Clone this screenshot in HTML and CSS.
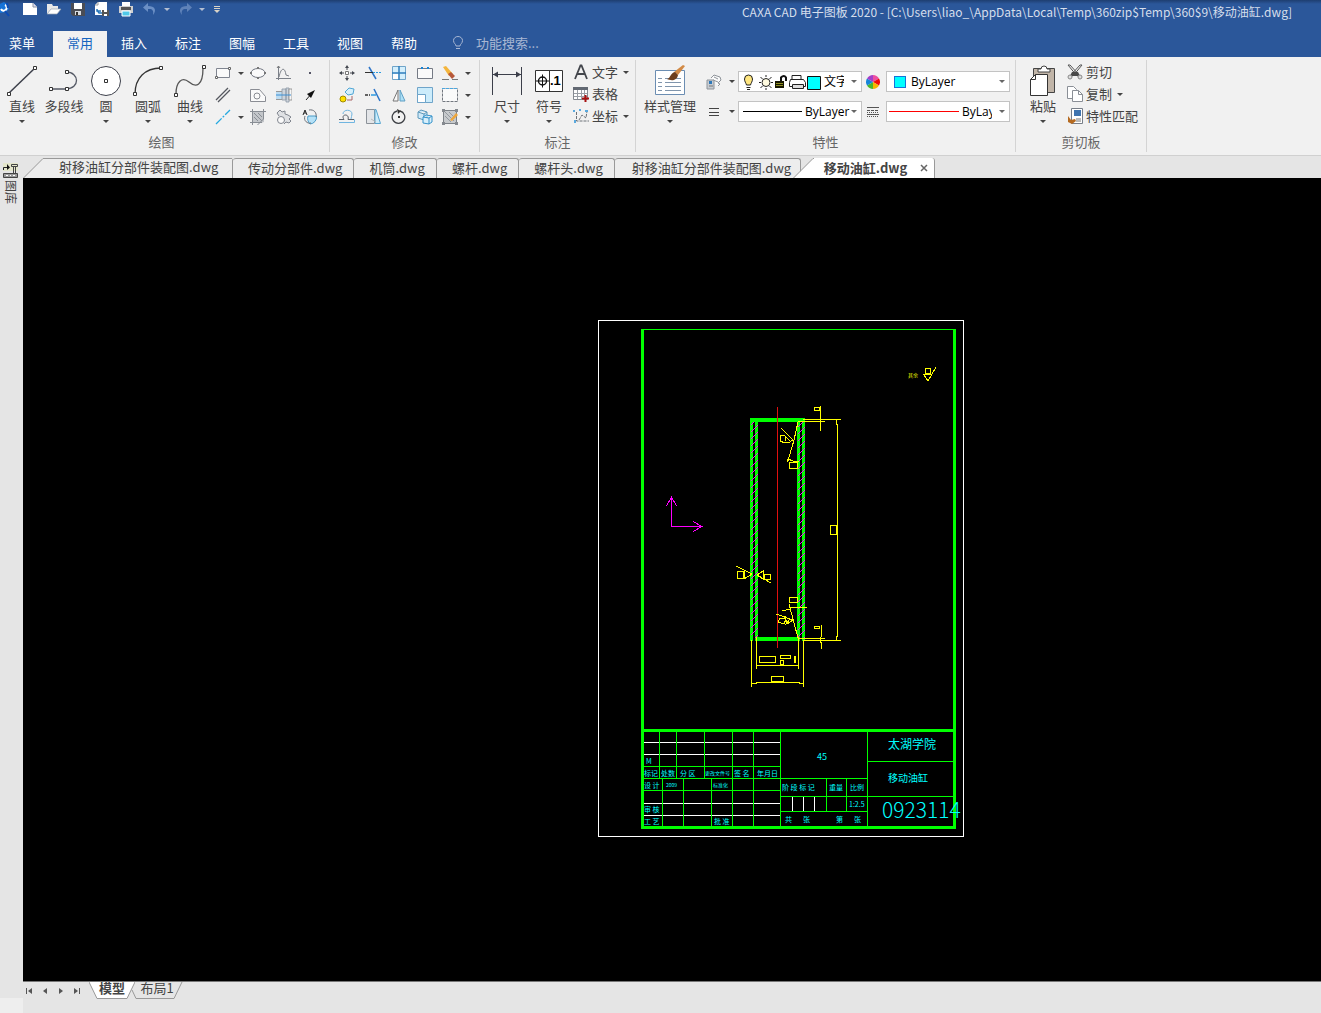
FILE: index.html
```html
<!DOCTYPE html>
<html lang="zh-CN">
<head>
    <meta charset="UTF-8">
    <meta name="viewport" content="width=device-width, initial-scale=1.0">
    <title>CAXA CAD 电子图板 2020</title>
    <link rel="stylesheet" href="styles.css">
</head>
<body>
    <!-- Title bar -->
    <header class="title-bar">
        <div class="quick-access">
            <button class="quick app" aria-label="CAXA"><svg width="12" height="18" viewBox="0 0 12 18"><path d="M0 4l4-2 4 3 1 4-3 3-6 1" fill="#1673d8"/><path d="M1 9a3 3 0 1 0 4-4" fill="none" stroke="#fff" stroke-width="2"/><path d="M5 11l4 5M7 3l1 5" stroke="#0a4bb5" stroke-width="2"/></svg></button>
            <button class="quick" aria-label="新建"><svg width="16" height="16" viewBox="0 0 16 16"><path d="M1 2h10l4 4v8H1z" fill="#fff"/><path d="M11 2v4h4" fill="#dde" stroke="#8a95a8"/></svg></button>
            <button class="quick" aria-label="打开"><svg width="16" height="16" viewBox="0 0 16 16"><path d="M1 13V3h5l1 2h5v3H6z" fill="#e8e8e8"/><path d="M1 13l4-5h10l-4 5z" fill="#fff" stroke="#9aa3b0" stroke-width=".7"/></svg></button>
            <button class="quick" aria-label="保存"><svg width="16" height="16" viewBox="0 0 16 16"><path d="M1 2h14v13H3l-2-2z" fill="#4a4d55"/><path d="M4 2h8v6H4z" fill="#fff"/><path d="M5 10h6v4H5z" fill="#d8dbe0"/><path d="M6 11h2v3H6z" fill="#333"/></svg></button>
            <button class="quick" aria-label="另存为"><svg width="16" height="16" viewBox="0 0 16 16"><path d="M4 1h9v13H1V4z" fill="#fff"/><path d="M4 1v3H1" fill="none" stroke="#999"/><path d="M3 8v2h4M3 9l2 3h3" stroke="#2674b8" stroke-width="1.5" fill="none"/><path d="M8 9h7v6H8z" fill="#555"/><path d="M10 9h3v2h-3zM10 13h3v2h-3z" fill="#fff"/></svg></button>
            <button class="quick" aria-label="打印"><svg width="16" height="16" viewBox="0 0 16 16"><path d="M4 1h8v5H4z" fill="#fff"/><path d="M1 5h14v7H1z" fill="#d0d0d0"/><path d="M3 6h10v3H3z" fill="#555"/><path d="M4 10h8v5H4z" fill="#50c8e8" stroke="#fff"/></svg></button>
            <button class="quick dim" aria-label="撤销"><svg width="16" height="16" viewBox="0 0 16 16"><path d="M6 2L1 6.500l5 4.500V8c4-.5 6 1 5 6 4-5 2-9-5-9z" fill="#6b8fc5"/></svg></button>
            <i class="caret light"></i>
            <button class="quick dim" aria-label="重做"><svg width="16" height="16" viewBox="0 0 16 16"><path d="M10 2l5 4.500-5 4.500V8c-4-.5-6 1-5 6-4-5-2-9 5-9z" fill="#5f82b8"/></svg></button>
            <i class="caret light"></i>
            <button class="quick more" aria-label="自定义"><svg width="8" height="9" viewBox="0 0 8 9"><path d="M1 1.500h6M1 3.500h6" stroke="#d9d3c6"/><path d="M1 5h6L4 8z" fill="#d9d3c6"/></svg></button>
        </div>
        <h1 class="title">CAXA CAD 电子图板 2020 - [C:\Users\liao_\AppData\Local\Temp\360zip$Temp\360$9\移动油缸.dwg]</h1>
    </header>

    <!-- Menu tabs -->
    <nav class="menu">
        <button class="menu-item first">菜单</button>
        <button class="menu-item active">常用</button>
        <button class="menu-item">插入</button>
        <button class="menu-item">标注</button>
        <button class="menu-item">图幅</button>
        <button class="menu-item">工具</button>
        <button class="menu-item">视图</button>
        <button class="menu-item">帮助</button>
        <label class="search">
            <svg width="12" height="14" viewBox="0 0 12 14"><path d="M4 10c0-2-2.500-2.500-2.500-5.500a4.500 4 0 0 1 9 0C10.500 7.500 8 8 8 10zM4 12.500h4" fill="none" stroke="#a9b7d3"/></svg>
            <input type="text" placeholder="功能搜索..." aria-label="功能搜索">
        </label>
    </nav>

    <!-- Ribbon -->
    <div class="ribbon">
        <section class="group draw">
            <div class="group-body">
                <button class="big"><svg width="32" height="32" viewBox="0 0 32 32"><path d="M3 28L29 3" stroke="#3c3f4a" stroke-width="1.500"/><path d="M1.500 27.500h3v3h-3zM27.500 1.500h3v3h-3z" class="node"/></svg><span>直线</span><i class="caret"></i></button>
                <button class="big"><svg width="32" height="32" viewBox="0 0 32 32"><path d="M2 24h16c14 0 14-17 0-17" fill="none" stroke="#555a66" stroke-width="1.300"/><path d="M1.500 22.500h3v3h-3zM17.500 22.500h3v3h-3zM17.500 5.500h3v3h-3z" class="node"/></svg><span>多段线</span></button>
                <button class="big"><svg width="32" height="32" viewBox="0 0 32 32"><circle cx="16" cy="16" r="14.500" fill="#fff" stroke="#3c3f4a"/><path d="M14.500 14.500h3v3h-3z" class="node"/></svg><span>圆</span><i class="caret"></i></button>
                <button class="big"><svg width="32" height="32" viewBox="0 0 32 32"><path d="M3 29C3 13 13 3 29 3" fill="none" stroke="#333" stroke-width="1.300"/><path d="M1.500 27.500h3v3h-3zM27.500 1.500h3v3h-3z" class="node"/></svg><span>圆弧</span><i class="caret"></i></button>
                <button class="big"><svg width="32" height="32" viewBox="0 0 32 32"><path d="M2 29c0-12 6-18 13-12s14 4 14-14" fill="none" stroke="#555" stroke-width="1.300"/><path d="M.5 28.500h3v3h-3zM28.500.5h3v3h-3z" class="node"/></svg><span>曲线</span><i class="caret"></i></button>
                <div class="tools">
                    <button class="tool split" aria-label="矩形"><svg width="16" height="16" viewBox="0 0 16 16"><path d="M1.500 3.500h13v9h-13z" fill="#fafafa" stroke="#808590"/><path d="M.5 11.500h2v2h-2zM13.500 2.500h2v2h-2z" fill="#fff" stroke="#666"/></svg><i class="caret"></i></button>
                    <button class="tool" aria-label="椭圆"><svg width="16" height="16" viewBox="0 0 16 16"><ellipse cx="8" cy="8" rx="7" ry="4.500" fill="#fafafa" stroke="#707580"/><path d="M7 2h2v2H7zM0 7h2v2H0zM14 7h2v2h-2zM7 12h2v2H7z" fill="#777"/></svg></button>
                    <button class="tool" aria-label="公式曲线"><svg width="16" height="16" viewBox="0 0 16 16"><path d="M2.500 1v14M0 13.500h15M3 12c2-10 6-10 7-2l3 1" fill="none" stroke="#7b8088"/><path d="M1 3l1.500-2L4 3" fill="none" stroke="#777"/></svg></button>
                    <button class="tool" aria-label="点"><svg width="16" height="16" viewBox="0 0 16 16"><path d="M7 7h2v2H7z" fill="#556"/></svg></button>

                    <button class="tool split" aria-label="平行线"><svg width="16" height="16" viewBox="0 0 16 16"><path d="M1 13L13 1M3 15L15 3" stroke="#55585f" stroke-width="1.300"/></svg></button>
                    <button class="tool" aria-label="轮廓"><svg width="16" height="16" viewBox="0 0 16 16"><path d="M.5 2.500h9l6 7v5H.5z" fill="#fafafa" stroke="#8a8d94"/><circle cx="7" cy="9" r="3" fill="none" stroke="#8a8d94"/></svg></button>
                    <button class="tool" aria-label="孔/轴"><svg width="16" height="16" viewBox="0 0 16 16"><path d="M0 4h6v8H0z" fill="#bcdcf2"/><path d="M6 2h4v11H6zM10 1h3v14h-3z" fill="#cfd5dc" stroke="#8b98a5" stroke-width=".8"/><path d="M13 2h3v11h-3z" fill="#f6f6f6" stroke="#888" stroke-width=".8"/><path d="M0 8h15" stroke="#3c8ed2"/><path d="M0 4.500h6M0 12.500h6" stroke="#999"/></svg></button>
                    <button class="tool" aria-label="箭头"><svg width="16" height="16" viewBox="0 0 16 16"><path d="M4 13l6-7" stroke="#222"/><path d="M13 3L5 7l4 4z" fill="#111"/></svg></button>

                    <button class="tool split" aria-label="中心线"><svg width="16" height="16" viewBox="0 0 16 16"><path d="M1 15L15 1" stroke="#25a9e0" stroke-width="1.300" stroke-dasharray="8 1.500 2 1.500"/></svg><i class="caret"></i></button>
                    <button class="tool" aria-label="剖面线"><svg width="16" height="16" viewBox="0 0 16 16"><path d="M2 3h12v10l-3 1H2z" fill="#c3c6ca"/><path d="M2.500 0v16M13.500 0v10l-6 6M0 2.500h16M0 13.500h12M4 4l8 8M8 4l4 4M4 8l4 4" fill="none" stroke="#888d94"/></svg></button>
                    <button class="tool" aria-label="齿轮"><svg width="16" height="16" viewBox="0 0 16 16"><path d="M1 4l3-3 2 2 3-1v3l3 1 3 2-2 2 2 2-2 2-3-1-2 2" fill="#dfe1e4" stroke="#81868f"/><circle cx="5" cy="11" r="3.500" fill="#fafafa" stroke="#81868f"/><path d="M1 4l2 3" stroke="#81868f"/></svg></button>
                    <button class="tool" aria-label="局部放大"><svg width="16" height="16" viewBox="0 0 16 16"><path d="M6 7h8.500A7 7 0 0 1 8 15c-2-2-3-5-2-8z" fill="#b5e1f7" stroke="#4a9cc8"/><path d="M7 1c5-1 8 3 7 7M3 7c-2 5 3 8 6 7" fill="none" stroke="#6c7078"/><path d="M1 6l2-5 2 5M2 4h2" fill="none" stroke="#222"/></svg></button>
                </div>
            </div>
            <h2>绘图</h2>
        </section>

        <section class="group modify">
            <div class="group-body">
                <div class="tools">
                    <button class="tool" aria-label="平移"><svg width="16" height="16" viewBox="0 0 16 16"><path d="M6 3l2-3 2 3zM6 13l2 3 2-3zM3 6L0 8l3 2zM13 6l3 2-3 2z" fill="#43474f"/><path d="M6.500 6.500h3v3h-3z" fill="#fff" stroke="#777"/><path d="M8 3v2M8 11v2M3 8h2M11 8h2" stroke="#43474f"/></svg></button>
                    <button class="tool" aria-label="裁剪"><svg width="16" height="16" viewBox="0 0 16 16"><path d="M4 2l7 12" stroke="#2e75c8" stroke-width="1.500"/><path d="M0 7.500h8" stroke="#333"/><path d="M8 7.500h8" stroke="#2e9be0" stroke-dasharray="2 1"/></svg></button>
                    <button class="tool" aria-label="阵列"><svg width="16" height="16" viewBox="0 0 16 16"><path d="M1.500 1.500h13v13h-13z" fill="#d4effc" stroke="#6fa4c9"/><path d="M8 1v14M1 8h14" stroke="#2f7fbd" stroke-width="1.500"/><path d="M2 9h5v5H2z" fill="#fff"/></svg></button>
                    <button class="tool" aria-label="打断"><svg width="16" height="16" viewBox="0 0 16 16"><path d="M4 3.500H.5v10h15v-10H12M6 3.500h4" fill="#fafafa" stroke="#757a84"/><path d="M4 2h2v2H4zM10 2h2v2h-2z" fill="#1584d8"/></svg></button>
                    <button class="tool split" aria-label="删除"><svg width="16" height="16" viewBox="0 0 16 16"><path d="M1 2l3-1 7 8-4 2z" fill="#f4b53c"/><path d="M6 9l3-2 4 4-3 3z" fill="#b7593b"/><path d="M0 14.500h7M10 14.500h6" stroke="#777"/></svg><i class="caret"></i></button>

                    <button class="tool" aria-label="平移复制"><svg width="16" height="16" viewBox="0 0 16 16"><circle cx="4" cy="12" r="3" fill="#ffe000" stroke="#a08b00"/><path d="M6 5l4-4 5 1-1 5-5 1z" fill="#d4effc" stroke="#52a7d5"/><path d="M8 13h5V9" fill="none" stroke="#a66" /></svg></button>
                    <button class="tool" aria-label="延伸"><svg width="16" height="16" viewBox="0 0 16 16"><path d="M9 2l6 12" stroke="#2e75c8" stroke-width="1.500"/><path d="M0 8h5" stroke="#333" stroke-width="1.500" stroke-dasharray="3 1"/><path d="M6 8h5" stroke="#2e9be0" stroke-width="1.500"/></svg></button>
                    <button class="tool" aria-label="镜像"><svg width="16" height="16" viewBox="0 0 16 16"><path d="M7 3v11H2z" fill="#fafafa" stroke="#777"/><path d="M9 3v11h5z" fill="#ade0f7" stroke="#5f9fc4"/></svg></button>
                    <button class="tool" aria-label="缩放"><svg width="16" height="16" viewBox="0 0 16 16"><path d="M.5.5h15v15H.5z" fill="#ccecfb" stroke="#6fa4c9"/><path d="M.5 7.500h8v8h-8z" fill="#fff" stroke="#6fa4c9"/></svg></button>
                    <button class="tool split" aria-label="拉伸"><svg width="16" height="16" viewBox="0 0 16 16"><path d="M.5 1.500h15v13H.5z" fill="#fafafa" stroke="#72777f" stroke-dasharray="3 1"/><path d="M0 1.500h16" stroke="#4ba7df" stroke-dasharray="3 1"/></svg><i class="caret"></i></button>

                    <button class="tool" aria-label="等距线"><svg width="16" height="16" viewBox="0 0 16 16"><path d="M0 10.500h5C1 5 11 4 9 10.500h6" fill="none" stroke="#5a6069"/><path d="M0 13.500h15.500v-3M4 5c0-5 9-5 9 0 0 2-1 3-1 5" fill="none" stroke="#70b5e0"/></svg></button>
                    <button class="tool" aria-label="倒角"><svg width="16" height="16" viewBox="0 0 16 16"><path d="M1.500.5h8v14h-8z" fill="#e3e5e8" stroke="#8c9299"/><path d="M10 .500h1l4.500 14H10z" fill="#ccecfb" stroke="#58a6d0"/><path d="M6 10l5 3" fill="none" stroke="#bbb"/></svg></button>
                    <button class="tool" aria-label="旋转"><svg width="16" height="16" viewBox="0 0 16 16"><path d="M9 2a6.300 6.300 0 1 1-3 0" fill="none" stroke="#3c3f44" stroke-width="1.300"/><path d="M6 0l4 2-3 3z" fill="#333"/><path d="M7 7h2v2H7z" fill="#333"/></svg></button>
                    <button class="tool" aria-label="块"><svg width="16" height="16" viewBox="0 0 16 16"><path d="M1 3l3-2 6 2v6l-3 2-6-2zM1 3l6 2 3-2M7 5v6" fill="#cfe9f8" stroke="#5c98bb"/><path d="M6 8l3-2 6 1v6l-3 2-6-1zM6 8l6 1 3-2M12 9v6" fill="#d8f0fc" stroke="#3592ca"/></svg></button>
                    <button class="tool split" aria-label="编辑填充"><svg width="16" height="16" viewBox="0 0 16 16"><path d="M1.500 1.500h13v13h-13z" fill="#c7cacd" stroke="#7d8288"/><path d="M3 3l9 9M7 3l6 6M3 7l6 6" stroke="#93989f"/><path d="M8 11l6-7 2 2-6 6z" fill="#efa63b"/><path d="M0 0h3v3H0zM13 0h3v3h-3zM0 13h3v3H0zM13 13h3v3h-3z" fill="#85898f"/></svg><i class="caret"></i></button>
                </div>
            </div>
            <h2>修改</h2>
        </section>

        <section class="group annotate">
            <div class="group-body">
                <button class="big"><svg width="32" height="32" viewBox="0 0 32 32"><path d="M1.500 2v28M30.500 2v28M2 9.500h28" stroke="#3c3f4a"/><path d="M2 9.500l5-3v6zM30 9.500l-5-3v6z" fill="#3c3f4a"/></svg><span>尺寸</span><i class="caret"></i></button>
                <button class="big"><svg width="32" height="32" viewBox="0 0 32 32"><path d="M2.500 5.500h27v21h-27zM16.500 5v22" fill="#fff" stroke="#333"/><circle cx="9.500" cy="16" r="4" fill="none" stroke="#111" stroke-width="1.400"/><path d="M3 16h13M9.500 9.500v13" stroke="#111"/><text x="17" y="20" class="symbol-num">.1</text></svg><span>符号</span><i class="caret"></i></button>
                <div class="rows">
                    <button class="row-button"><svg width="16" height="16" viewBox="0 0 16 16"><path d="M2 15L7.500 1.500h1L14 15M4 10h8" fill="none" stroke="#43464c" stroke-width="1.800"/></svg><span>文字</span><i class="caret"></i></button>
                    <button class="row-button"><svg width="16" height="16" viewBox="0 0 16 16"><path d="M.5 1.500h14v12H.5z" fill="#fff" stroke="#868b92"/><path d="M0 1h15v3H0z" fill="#626872"/><path d="M4.500 4v9M8.500 4v9M1 7.500h13M1 10.500h13M11.500 4v9" stroke="#9a9fa6"/><path d="M12.500 9v7M9 12.500h7" stroke="#a71010" stroke-width="2"/></svg><span>表格</span></button>
                    <button class="row-button"><svg width="16" height="16" viewBox="0 0 16 16"><path d="M3.500 4v9H16M6 12l3-5 4 3 1-7" fill="none" stroke="#6d7278" stroke-dasharray="3 1"/><path d="M0 2h2v2H0zM6 1h2v2H6zM12 2h3v2h-3zM1 12h2v3H1z" fill="#5aa9de"/></svg><span>坐标</span><i class="caret"></i></button>
                </div>
            </div>
            <h2>标注</h2>
        </section>

        <section class="group props">
            <div class="group-body">
                <button class="big wide"><svg width="32" height="32" viewBox="0 0 32 32"><path d="M1.500 5.500h29v24h-29z" fill="#fff" stroke="#6b8db2"/><path d="M4 13.500h4M4 17.500h4M4 21.500h4M4 25.500h4M11 13.500h16M11 17.500h16M11 21.500h16M11 25.500h16" stroke="#8095ac"/><path d="M20 7l9-7 2 1-7 9z" fill="#d28a45"/><path d="M13 14c4-1 3-6 8-7l3 3c-1 6-7 6-11 4z" fill="#6e3e1c"/></svg><span>样式管理</span><i class="caret"></i></button>
                <div class="prop-rows">
                    <div class="prop-row">
                        <button class="tool split" aria-label="图层"><svg width="16" height="16" viewBox="0 0 16 16"><path d="M5 4l3-3 6 2 1 3-3 3 2 1-2 2" fill="#fafafa" stroke="#8f949a"/><path d="M7 6l5 2M8 3l4 2" stroke="#8f949a"/><path d="M1 6h7v9H1z" fill="#c7ccd2" stroke="#8f949a"/><path d="M3 7h3v3H3z" fill="#2e78b8"/><path d="M3 12h4" stroke="#777"/></svg><i class="caret"></i></button>
                        <div class="combo">
                            <svg width="80" height="16" viewBox="0 0 80 16"><path d="M5.500 11C5 9 3.500 7.500 3.500 5a4 4 0 0 1 8 0c0 2.500-1.500 4-2 6z" fill="#ffe680" stroke="#222"/><path d="M5.500 13.500h4M6 15.500h3" stroke="#222"/><circle cx="25" cy="8.500" r="4" fill="#fffbe0" stroke="#222"/><path d="M25 1v2M25 14v2M18 8.500h2M30 8.500h2M19.500 3l2 2M30.500 3l-2 2M19.500 14l2-2M30.500 14l-2-2" stroke="#222"/><path d="M34 7h9v7h-9z" fill="#151500"/><path d="M35 9.500h7M35 11.500h7" stroke="#8c8c20"/><path d="M40 7V3.500q3-3 5 0V7" fill="none" stroke="#111" stroke-width="2"/><path d="M51 6V1.500h9V6M49.500 5.500h13l2 3v4h-16v-4z" fill="#fff" stroke="#222"/><path d="M51.500 10.500h11v4h-11z" fill="#ddd" stroke="#222"/><path d="M66.500 2.500h13v13h-13z" fill="#0ff" stroke="#111"/></svg>
                            <select class="clipped" aria-label="图层列表"><option>文字层</option></select>
                            <i class="caret"></i>
                        </div>
                        <button class="tool colors" aria-label="颜色"><svg width="14" height="14" viewBox="0 0 14 14"><path d="M7 7V0a7 7 0 0 1 6 3.500z" fill="#ed4fa0"/><path d="M7 7l6-3.500a7 7 0 0 1 0 7z" fill="#f00b0b"/><path d="M7 7l6 3.500A7 7 0 0 1 7 14z" fill="#f7b500"/><path d="M7 7v7a7 7 0 0 1-6-3.500z" fill="#4bb72b"/><path d="M7 7l-6 3.500a7 7 0 0 1 0-7z" fill="#1685d9"/><path d="M7 7L1 3.500A7 7 0 0 1 7 0z" fill="#a33fc8"/></svg></button>
                        <div class="combo">
                            <i class="swatch"></i>
                            <select aria-label="颜色列表"><option>ByLayer</option></select>
                            <i class="caret"></i>
                        </div>
                    </div>
                    <div class="prop-row">
                        <button class="tool split" aria-label="线宽"><svg width="16" height="16" viewBox="0 0 16 16"><path d="M3 4.500h10M3 8.500h10M3 11.500h10" stroke="#444"/></svg><i class="caret"></i></button>
                        <div class="combo">
                            <i class="line-sample black"></i>
                            <select aria-label="线宽列表"><option>ByLayer</option></select>
                            <i class="caret"></i>
                        </div>
                        <button class="tool colors" aria-label="线型"><svg width="14" height="14" viewBox="0 0 14 14"><path d="M1 2.500h12M1 9.500h12" stroke="#555"/><path d="M1 5.500h12" stroke="#555" stroke-dasharray="3 1"/><path d="M1 7.500h12M1 11.500h12" stroke="#555" stroke-dasharray="1 1"/></svg></button>
                        <div class="combo">
                            <i class="line-sample red"></i>
                            <select class="clipped" aria-label="线型列表"><option>ByLayer</option></select>
                            <i class="caret"></i>
                        </div>
                    </div>
                </div>
            </div>
            <h2>特性</h2>
        </section>

        <section class="group clipboard">
            <div class="group-body">
                <button class="big"><svg width="32" height="32" viewBox="0 0 32 32"><path d="M6.500 3.500h21v24h-21z" fill="#c1b5a8" stroke="#444"/><path d="M11 4h3q0-3 3-3t3 3h3v3H11z" fill="#fff" stroke="#444"/><path d="M8.500 9.500h12v21h-17v-16z" fill="#fff" stroke="#333"/><path d="M8.500 9.500v5h-5" fill="none" stroke="#333"/></svg><span>粘贴</span><i class="caret"></i></button>
                <div class="rows">
                    <button class="row-button"><svg width="16" height="16" viewBox="0 0 16 16"><path d="M1 1l2 0 9 10-2 1zM15 1l-2 0-9 10 2 1z" fill="#f5f5f5" stroke="#555"/><path d="M5 8h6l2 4H3z" fill="#4a4a4a"/><circle cx="3" cy="13" r="2" fill="#ddd" stroke="#888"/><circle cx="13" cy="13" r="2" fill="#ddd" stroke="#888"/></svg><span>剪切</span></button>
                    <button class="row-button"><svg width="16" height="16" viewBox="0 0 16 16"><path d="M.5.500h6l3 3v9h-9z" fill="#fff" stroke="#8a8f96"/><path d="M5.500 4.500h6l4 4v7h-10z" fill="#fff" stroke="#8a8f96"/><path d="M11.500 4.500v4h4" fill="none" stroke="#8a8f96"/></svg><span>复制</span><i class="caret"></i></button>
                    <button class="row-button"><svg width="16" height="16" viewBox="0 0 16 16"><path d="M4.500.5h11v15h-11z" fill="#fff" stroke="#777e88"/><path d="M7 2h7v6H7z" fill="#3f74b0"/><path d="M9 11h5M9 13h5" stroke="#777"/><path d="M1 8l3 4 4-1 1 2-4 3-4-2z" fill="#b56a20"/></svg><span>特性匹配</span></button>
                </div>
            </div>
            <h2>剪切板</h2>
        </section>
    </div>

    <main class="main">
        <!-- Library side bar -->
        <aside class="side">
            <button class="library"><svg width="15" height="16" viewBox="0 0 15 16"><path d="M0 0h15v8H0z" fill="#e4e6cb"/><path d="M.5 7V4.500H5" fill="none" stroke="#222"/><path d="M4 1l3 3.500L4 7z" fill="#111"/><path d="M8.500 1.500h6v2h-6zM10.500 4v6M12.500 4v6" fill="none" stroke="#444"/><path d="M.5 10.500h14v4H.5z" fill="#999" stroke="#444"/><path d="M3 12.500h2M7 12.500h1M10 12.500h2" stroke="#fff"/></svg><span>图库</span></button>
        </aside>

        <div class="documents">
            <!-- Document tabs -->
            <div class="doc-tabs">
                <button class="doc-tab first"><svg class="slant" width="21" height="21" viewBox="0 0 21 21"><path d="M0 21L20 .5h1V21z" fill="#ededed"/><path d="M0 20.500L20 .5h1" fill="none" stroke="#999"/></svg><span>射移油缸分部件装配图.dwg</span></button>
                <button class="doc-tab">传动分部件.dwg</button>
                <button class="doc-tab">机筒.dwg</button>
                <button class="doc-tab">螺杆.dwg</button>
                <button class="doc-tab">螺杆头.dwg</button>
                <button class="doc-tab long">射移油缸分部件装配图.dwg</button>
                <button class="doc-tab current"><svg class="slant" width="21" height="21" viewBox="0 0 21 21"><path d="M0 21L20 .5h1V21z" fill="#fff"/><path d="M0 20.500L20 .5h1" fill="none" stroke="#999"/></svg><span>移动油缸.dwg</span><svg width="8" height="8" viewBox="0 0 8 8"><path d="M1 1l6 6M7 1L1 7" stroke="#666" stroke-width="1.500"/></svg></button>
            </div>

            <!-- Drawing canvas -->
            <div class="canvas">
                <svg class="sheet" width="367" height="518" viewBox="598 320 367 518" shape-rendering="crispEdges">
                    <defs>
                        <pattern id="hatch" width="7" height="7" patternUnits="userSpaceOnUse"><path d="M0 7L7 0" stroke="#f0f"/></pattern>
                    </defs>
                    <path d="M598.5 320.500h365v516h-365z" class="white"/>
                    <path d="M641 329.500h315" class="green"/>
                    <path d="M642.500 329v499M954.500 329v499M641 730.500h315M641 827.500h315" class="green thick"/>

                    <!-- Cylinder -->
                    <path d="M751.500 418v223M756.500 418v223M798.500 418v223M803.500 418v223" class="green thick"/>
                    <path d="M751 420h53M757 639h42" class="green edge"/>
                    <path d="M751 422h7v216h-7zM798 422h7v216h-7z" fill="url(#hatch)"/>
                    <path d="M777.500 407v241" class="axis"/>

                    <!-- Dimensions -->
                    <g class="yellow">
                        <path d="M820.500 406v25M814.500 407.500h5v3h-5zM803 419.500h38M798 421.500h27M836.500 420v4h1v212h-1v5M830.500 525.500h6v9h-6z"/>
                        <path d="M798 422l-4 18-6 21M787 462l1-3 5 2h6M789.500 462.500h8v6h-8zM781 428l12 12M793 440l-5 3-3-1M785 443l-5-2 1-6 4 1 1 5M785 436l5 5"/>
                        <path d="M736 566l16 8-8 5v-9M737.500 571.500h6v7h-6zM757 575l6-4v9M757 575l14 8M757 575l6 4M764.500 574.500h6v5h-6z"/>
                        <path d="M789.500 597.500h8v5h-8zM789 604l9 34M790 607.500h17M782 611l8-2M776 614l17 6-6 4-2-8M778 622l2-4 6 1-2 5zM785 625l5-6"/>
                        <path d="M821.500 625v11l-1 2v4l1 1v6M814.500 626.500h5v2h-5zM798 638.500h27M803 640.500h38"/>
                        <path d="M751.500 640v47M803.500 640v47M756.500 637v32M798.500 637v32M756 665.500h42M752 683.500h4v-1h43v1h4M759.500 656.500h16v6h-16zM780.500 655.500h10v3h-10zM780.500 660.500h3v4h-3zM794.500 656.500h1v6h-1zM771.500 676.500h12v5h-12z"/>
                        <path d="M925.500 368.500h5v5h-5zM923 374.500h9M924 375l4 6 8-14"/>
                    </g>
                    <text x="908" y="377" class="yellow-text">其余</text>

                    <!-- Coordinate system -->
                    <path d="M671.500 497v29.500H702M666.500 506l5-9 5 9M693 521.500l9 5-9 5" class="ucs"/>

                    <!-- Title block -->
                    <path d="M644 742.500h136M644 754.500h136M644 803.500h136M644 815.500h136M792.500 796v15M803.500 796v15M814.500 796v15" class="white"/>
                    <path d="M659.500 731v47M676.500 731v47M704.500 731v47M732.500 731v96M753.500 731v96M662.500 778v49M683.500 778v49M711.500 778v49M780.500 731v96M867.500 731v96M644 766.500h136M644 778.500h223M644 790.500h136M780 796.500h174M780 811.500h87M826.500 778v33M846.500 778v33M867 761.500h87" class="green"/>
                    <g class="tiny">
                        <text x="646" y="764">M</text>
                        <text x="644" y="776">标记</text>
                        <text x="661" y="776">处数</text>
                        <text x="680" y="776">分 区</text>
                        <text x="705" y="775" class="mini">更改文件号</text>
                        <text x="734" y="776">签 名</text>
                        <text x="757" y="776">年月日</text>
                        <text x="644" y="788">设 计</text>
                        <text x="666" y="787" class="mini">2009</text>
                        <text x="713" y="787" class="mini">标准化</text>
                        <text x="644" y="812">审 核</text>
                        <text x="644" y="824">工 艺</text>
                        <text x="714" y="824">批 准</text>
                        <text x="782" y="790">阶 段 标 记</text>
                        <text x="829" y="790">重量</text>
                        <text x="850" y="790">比例</text>
                        <text x="849" y="807">1:2.5</text>
                        <text x="785" y="822">共</text>
                        <text x="803" y="822">张</text>
                        <text x="836" y="822">第</text>
                        <text x="854" y="822">张</text>
                    </g>
                    <text x="817" y="760" class="material">45</text>
                    <text x="888" y="749" class="school">太湖学院</text>
                    <text x="888" y="782" class="part">移动油缸</text>
                    <text x="882" y="818" class="number">0923114</text>
                </svg>
            </div>

            <!-- Layout tabs -->
            <div class="layout-bar">
                <button class="nav" aria-label="第一个"><svg width="8" height="8" viewBox="0 0 8 8"><path d="M1.500 1v6" stroke="#555"/><path d="M7 1v6L3 4z" fill="#555"/></svg></button>
                <button class="nav" aria-label="上一个"><svg width="8" height="8" viewBox="0 0 8 8"><path d="M6 1v6L2 4z" fill="#555"/></svg></button>
                <button class="nav" aria-label="下一个"><svg width="8" height="8" viewBox="0 0 8 8"><path d="M2 1v6l4-3z" fill="#555"/></svg></button>
                <button class="nav" aria-label="最后一个"><svg width="8" height="8" viewBox="0 0 8 8"><path d="M6.500 1v6" stroke="#555"/><path d="M1 1v6l4-3z" fill="#555"/></svg></button>
                <button class="layout-tab on"><svg width="46" height="17" viewBox="0 0 46 17"><path d="M0 0l8 16.500h30L46 0" fill="#fff" stroke="#999"/></svg><span>模型</span></button>
                <button class="layout-tab"><svg width="52" height="17" viewBox="0 0 52 17"><path d="M1 8l4 8.500h38L51 0" fill="none" stroke="#999"/></svg><span>布局1</span></button>
            </div>
        </div>
    </main>
</body>
</html>
```
FILE: styles.css
```css
* {
    box-sizing: border-box;
}

body {
    margin: 0;
    min-height: 100vh;
    display: flex;
    flex-direction: column;
    background: #e5e5e5;
    color: #444;
    font-family: "Noto Sans CJK SC", "Open Sans", sans-serif;
    font-size: 13px;
    line-height: 16px;
}

button {
    margin: 0;
    padding: 0;
    border: none;
    background: none;
    color: inherit;
    font: inherit;
    white-space: nowrap;
}

svg {
    display: block;
    flex: none;
}

/* Small drop-down arrow */
.caret {
    flex: none;
    width: 5px;
    border: solid transparent;
    border-width: 3px 3px 0;
    border-top-color: #444;
}

.caret.light {
    border-top-color: #b5bfd2;
}

/* Title bar */
.title-bar {
    display: flex;
    justify-content: space-between;
    height: 31px;
    padding-right: 29px;
    background: linear-gradient(#1e3e70, #2b579a 4px);
}

.quick-access {
    display: flex;
    align-items: center;
    height: 18px;
}

.quick {
    width: 24px;
    display: flex;
    justify-content: center;
}

.quick.app {
    width: 18px;
    justify-content: flex-start;
}

.quick.dim {
    margin-left: 1px;
    width: 22px;
}

.quick-access .caret {
    margin: 0 3px;
}

.quick.more {
    width: 18px;
}

.title {
    margin: 0;
    padding-top: 4px;
    color: #d5deec;
    font-size: 12px;
    font-weight: normal;
}

/* Menu */
.menu {
    display: flex;
    height: 26px;
    background: #2b579a;
    color: #fff;
}

.menu-item {
    width: 54px;
    padding-bottom: 2px;
}

.menu-item.first {
    width: 53px;
    padding-right: 9px;
}

.menu-item.active {
    background: #f1f1f1;
    color: #1565c0;
}

.search {
    display: flex;
    align-items: center;
    gap: 12px;
    margin-left: 21px;
    padding-bottom: 2px;
}

.search input {
    width: 120px;
    padding: 0;
    border: none;
    background: none;
    font: inherit;
}

.search input::placeholder {
    color: #a9b7d3;
    opacity: 1;
}

/* Ribbon */
.ribbon {
    display: flex;
    height: 99px;
    padding: 3px 0;
    background: #f1f1f1;
    border-bottom: 1px solid #d0d0d0;
}

.group {
    display: flex;
    flex-direction: column;
    border-right: 1px solid #d4d4d4;
}

.group h2 {
    margin: 0;
    color: #666;
    font-size: 13px;
    font-weight: normal;
    text-align: center;
}

.group-body {
    display: flex;
    height: 74px;
    padding: 5px 0 0 6px;
}

.draw {
    width: 330px;
}

.draw .group-body {
    padding-left: 1px;
}

.draw h2 {
    padding-right: 6px;
}

.modify {
    width: 150px;
}

.modify .group-body {
    padding-left: 4px;
}

.annotate {
    width: 156px;
}

.props {
    width: 380px;
}

.props .group-body {
    padding-left: 5px;
}

.clipboard {
    width: 131px;
}

.big {
    width: 42px;
    display: flex;
    flex-direction: column;
    align-items: center;
}

.big span {
    margin: 1px 0 6px;
}

.big.wide {
    width: 58px;
}

.node {
    fill: #fff;
    stroke: #333;
}

.symbol-num {
    font: bold 13px "Liberation Sans", sans-serif;
}

.tools {
    display: grid;
    grid-template-rows: repeat(3, 22px);
    margin-top: -3px;
}

.draw .tools {
    grid-template-columns: 34px 26px 26px 26px;
}

.modify .tools {
    grid-template-columns: repeat(4, 26px) 40px;
}

.tool {
    display: flex;
    align-items: center;
    justify-content: center;
}

.tool.split {
    justify-content: flex-start;
    padding-left: 4px;
    gap: 7px;
}

.rows {
    display: grid;
    grid-template-rows: repeat(3, 22px);
    margin-top: -4px;
    padding-left: 3px;
}

.row-button {
    display: flex;
    align-items: center;
    gap: 3px;
}

.row-button .caret {
    margin-left: 2px;
}

.prop-rows {
    display: flex;
    flex-direction: column;
    gap: 9px;
    padding: 6px 0 0 3px;
}

.prop-row {
    display: flex;
    height: 21px;
}

.prop-row .split {
    width: 36px;
}

.prop-row .colors {
    width: 24px;
    padding-right: 2px;
}

.combo {
    display: flex;
    align-items: center;
    width: 124px;
    padding: 0 4px 0 2px;
    background: #fff;
    border: 1px solid #c3c3c3;
}

.combo select {
    flex: 1;
    min-width: 0;
    height: 19px;
    margin-left: 3px;
    padding: 0;
    border: none;
    background: none;
    color: #000;
    font: 12px/16px "Open Sans", "Noto Sans CJK SC", sans-serif;
    appearance: none;
}

.combo .clipped {
    margin-right: 7px;
}

.combo .caret {
    border-top-color: #666;
}

.swatch {
    width: 12px;
    height: 12px;
    margin: 0 2px 0 5px;
    background: #0ff;
    border: 1px solid #1673d8;
}

.line-sample {
    flex: none;
    height: 1px;
}

.black {
    width: 59px;
    margin-left: 2px;
    background: #000;
}

.red {
    width: 70px;
    background: #f00;
}

/* Main area */
.main {
    flex: 1;
    display: flex;
}

.side {
    width: 23px;
    padding: 7px 0 0 3px;
    background: linear-gradient(#eee, #eee) no-repeat bottom left / 23px 15px;
}

.library {
    display: flex;
    flex-direction: column;
    align-items: center;
    gap: 1px;
    width: 15px;
}

.library span {
    font-size: 12px;
    writing-mode: vertical-rl;
    text-orientation: sideways;
}

.documents {
    flex: 1;
    display: flex;
    flex-direction: column;
}

/* Document tabs */
.doc-tabs {
    display: flex;
    height: 22px;
    padding-top: 2px;
}

.doc-tab {
    display: flex;
    align-items: center;
    padding: 0 11px 2px 15px;
    background: #ededed;
    border-top: 1px solid #999;
    border-right: 1px solid #999;
    border-radius: 3px 3px 0 0;
}

.doc-tab.first,
.doc-tab.current {
    padding: 0;
    background: none;
    border-top: none;
}

.doc-tab.first {
    width: 210px;
}

.doc-tab.first span {
    flex: 1;
    align-self: stretch;
    padding-left: 15px;
    background: #ededed;
    border-top: 1px solid #999;
    text-align: left;
}

.doc-tab .slant {
    align-self: flex-start;
}

.doc-tab.long {
    width: 186px;
    padding-left: 17px;
}

.doc-tab.current {
    width: 142px;
    margin-left: -8px;
    padding-right: 6px;
    background: linear-gradient(#fff, #fff) no-repeat 20px 0;
}

.doc-tab.current span {
    flex: 1;
    padding-left: 10px;
    text-align: left;
    font-weight: bold;
}

/* Canvas */
.canvas {
    position: relative;
    flex: 1;
    min-height: 700px;
    background: #000;
}

.sheet {
    position: absolute;
    left: 575px;
    top: 142px;
    overflow: visible;
}

.sheet path {
    fill: none;
}

.sheet path[fill] {
    fill: url(#hatch);
}

.white {
    stroke: #fff;
}

.green {
    stroke: #0f0;
}

.thick {
    stroke-width: 3px;
}

.edge {
    stroke-width: 4px;
}

.axis {
    stroke: #e01010;
}

.yellow {
    stroke: #ff0;
}

.ucs {
    stroke: #f0f;
}

.sheet text {
    fill: #0ff;
}

.sheet .yellow-text {
    fill: #ff0;
    font-size: 5px;
}

.tiny {
    font-size: 7px;
}

.mini {
    font-size: 5px;
}

.material {
    font-size: 9px;
}

.school {
    font-size: 12px;
}

.part {
    font-size: 10px;
}

.number {
    font-size: 21px;
    font-weight: 300;
}

/* Layout bar */
.layout-bar {
    display: flex;
    height: 32px;
    padding-left: 2px;
    border-top: 1px solid #777;
}

.nav {
    display: flex;
    align-items: center;
    width: 16px;
    height: 18px;
}

.layout-tab {
    display: grid;
    height: 17px;
    margin-right: -4px;
}

.layout-tab svg,
.layout-tab span {
    grid-area: 1 / 1;
}

.layout-tab span {
    align-self: start;
    justify-self: center;
    line-height: 12px;
}

.layout-tab.on {
    font-weight: bold;
}
```
